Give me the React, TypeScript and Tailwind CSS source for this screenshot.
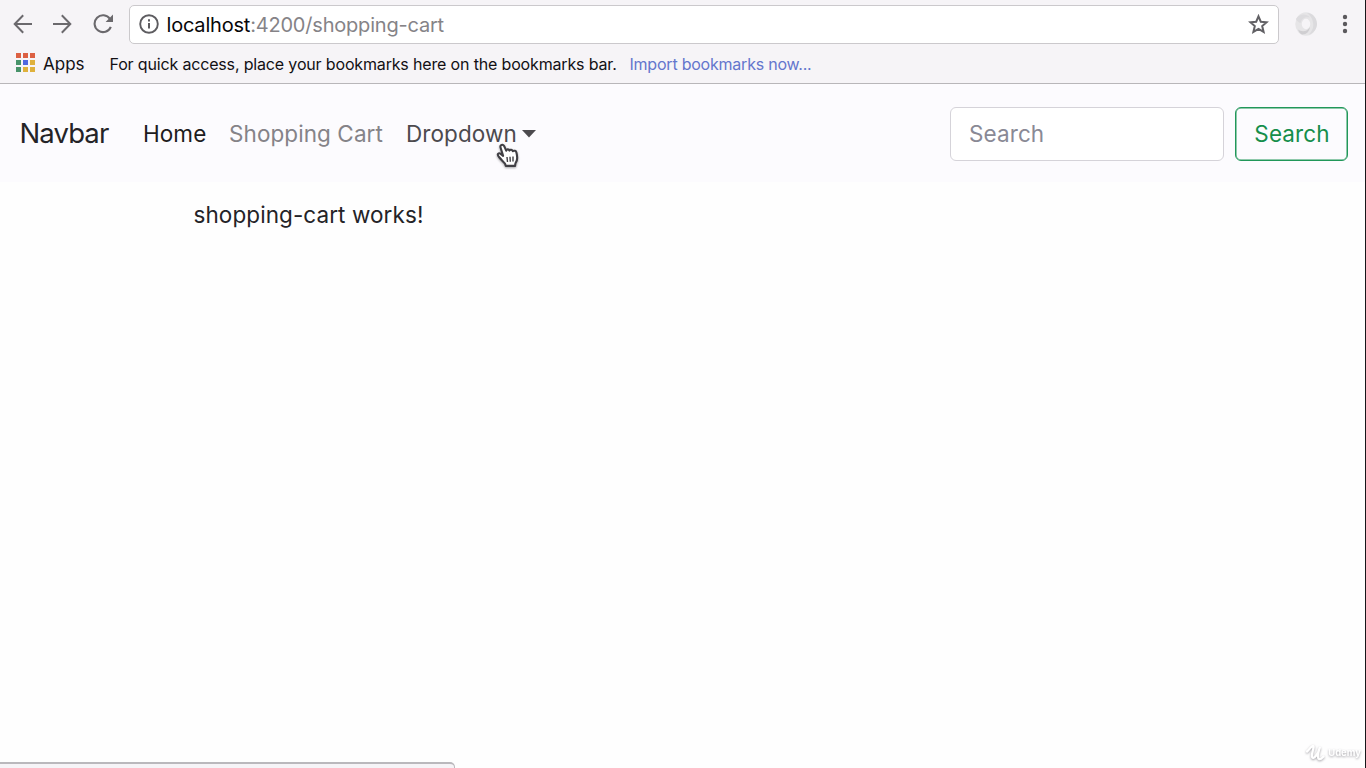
import React from "react";

const APP_COLORS = [
  "#dc6043", "#dc6043", "#dc6043",
  "#48936a", "#5067e0", "#dfb13c",
  "#48936a", "#dfb13c", "#dfb13c",
];

function BackIcon() {
  return (
    <svg className="block h-[20px] w-[20px]" viewBox="0 0 20 20" fill="none" stroke="#6b696d" strokeWidth="2">
      <path d="M19 10H2M10.2 1.3 1.7 10l8.5 8.7" />
    </svg>
  );
}

function ForwardIcon() {
  return (
    <svg className="block h-[20px] w-[20px]" viewBox="0 0 20 20" fill="none" stroke="#6b696d" strokeWidth="2">
      <path d="M1 10h17M9.8 1.3l8.5 8.7-8.5 8.7" />
    </svg>
  );
}

function ReloadIcon() {
  return (
    <svg className="block h-[20px] w-[21px]" viewBox="0 0 21 20" fill="none">
      <path d="M17 5A8.4 8.4 0 1 0 17.8 12.8" stroke="#6b696d" strokeWidth="2.1" />
      <path d="M20 .6V8h-7.4z" fill="#6b696d" />
    </svg>
  );
}

function InfoIcon() {
  return (
    <svg className="block h-[20px] w-[20px]" viewBox="0 0 20 20" fill="none">
      <circle cx="10" cy="10" r="8.8" stroke="#5d5c60" strokeWidth="1.9" />
      <path d="M9 9h2v5.6H9zM9 5.3h2v2.1H9z" fill="#5d5c60" />
    </svg>
  );
}

function StarIcon() {
  return (
    <svg className="block h-[20px] w-[21px]" viewBox="0 0 21 20" fill="none" stroke="#626165" strokeWidth="2">
      <path d="m10.5 2.3 2.3 5.4 5.9.5-4.5 3.9 1.4 5.8-5.1-3.1-5.1 3.1 1.4-5.8-4.500-3.900 5.900-.5z" />
    </svg>
  );
}

function SwirlIcon() {
  return (
    <svg className="block h-[24px] w-[24px]" viewBox="0 0 24 24">
      <ellipse cx="12" cy="12" rx="7.500" ry="8.500" fill="none" stroke="#e6e5e7" strokeWidth="6.500" />
      <path d="M13 1c6 .5 10 5 10 11 0 5-3.500 9.500-8.500 10.700C18 19.500 20 15.500 19 10.500 18.500 6.500 16 3 13 1z" fill="#dbdadd" />
      <path d="M4 17.500c4 3 9.500 2 12-2.500-.5 4.500-3.500 7.500-7.500 7.500-2 0-3.700-2.500-4.500-5z" fill="#cfced1" />
      <path d="M2 7C4.500 2.500 11.500.5 16 5.500 11.500 4.500 7.500 6.500 6.500 11 4.500 10.500 3 9 2 7z" fill="#dddcdf" />
    </svg>
  );
}

function HandCursor() {
  return (
    <svg className="absolute left-[90px] top-[26px] h-[27px] w-[24px] drop-shadow-[0_1px_1px_rgba(0,0,0,0.35)]" viewBox="0 0 24 27">
      <path
        d="M5.200 2.200c1.100-.8 2.500-.3 3 .9l2 4.600c.1-1.600 2.700-1.900 3.300-.1.600-1.300 2.900-1 3.300.6 1.200-1 3.200-.3 3.600 1.200.7 2.700 1.200 5.300.4 8-.5 1.600-1.400 2.500-1.500 3.600l-.2 1.900H9.800L9 20.700c-1.700-2.200-3.600-3.800-5.800-6.400-1.200-1.400-1.900-2.700-1-3.600 1-.9 2.500-.2 3.800 1.300l1.100.8L4.600 4.700c-.4-1.100-.2-2 .6-2.500z"
        fill="white" stroke="#403f44" strokeWidth="2.100" strokeLinejoin="round"
      />
      <path d="m11 14 .5 5M14 13.800l.3 5M17 13.500v5" stroke="#414045" strokeWidth="1.400" />
    </svg>
  );
}

function BrowserChrome() {
  return (
    <header className="h-[84px] border-b border-[#b8b6b9] bg-[#f6f4f7]">
      <div className="flex h-[48px] items-center pl-[13px]">
        <BackIcon />
        <div className="ml-[19px]"><ForwardIcon /></div>
        <div className="ml-[20.500px]"><ReloadIcon /></div>
        <div className="ml-[15px] flex h-[39px] w-[1150.500px] items-center rounded-[5px] border border-[#cbc9cc] bg-white pl-[9px] pr-[9.500px]">
          <InfoIcon />
          <div className="ml-[8px] flex-1 whitespace-nowrap pt-[2px] text-[20px] tracking-[-0.200px] text-[#858387]">
            <span className="text-[#080709]">localhost</span>:4200/shopping-cart
          </div>
          <StarIcon />
        </div>
        <div className="ml-[14.500px]"><SwirlIcon /></div>
        <svg className="ml-[24px] block h-[20px] w-[6px]" viewBox="0 0 6 20" fill="#5b595d">
          <circle cx="3" cy="3" r="2.200" />
          <circle cx="3" cy="10" r="2.200" />
          <circle cx="3" cy="17" r="2.200" />
        </svg>
      </div>
      <div className="flex h-[32px] items-center whitespace-nowrap pl-4 text-[16px] text-[#121014]">
        <div className="-mt-[3px] grid grid-cols-3 gap-[2px]">
          {APP_COLORS.map((color, i) => (
            <span key={i} className="h-[5px] w-[5px]" style={{ backgroundColor: color }} />
          ))}
        </div>
        <span className="ml-[8px] w-[66.500px] pt-[1.500px] text-[17px]">Apps</span>
        <span className="w-[520px] tracking-[-0.160px]">For quick access, place your bookmarks here on the bookmarks bar.</span>
        <span className="tracking-[-0.220px] text-[#6476cd]">Import bookmarks now...</span>
      </div>
    </header>
  );
}

function Navbar() {
  return (
    <nav className="flex h-[98px] items-center bg-[#fcfbfe] pl-[19.500px] pr-[17px] pt-[2px] text-[22.500px] tracking-[0.080px]">
      <a className="w-[123.500px] text-[27.500px] tracking-[-0.900px] text-[#242327]">Navbar</a>
      <a className="w-[86px] text-[#1d1c20]">Home</a>
      <a className="w-[177px] whitespace-nowrap text-[#858388]">Shopping Cart</a>
      <div className="relative flex items-center text-[#4c4a4e]">
        <span className="w-[116px]">Dropdown</span>
        <svg className="h-[8px] w-[14px]" viewBox="0 0 14 8"><path d="M0 0h14L7 7.500z" fill="#4c4a4e" /></svg>
        <HandCursor />
      </div>
      <input
        placeholder="Search"
        className="ml-auto h-[54px] w-[274px] rounded-[6px] border border-[#d5d3d9] bg-white px-[18px] pb-[2px] text-[22.500px] tracking-[0.100px] placeholder:text-[#898995]"
      />
      <button className="ml-[11px] h-[54px] w-[113px] rounded-[6px] border border-[#219759] pl-[1px] text-[22.500px] tracking-[0.100px] text-[#158e4b] shadow-[inset_0_0_0_0.5px_#219759]">
        Search
      </button>
    </nav>
  );
}

export default function App() {
  return (
    <div className="relative flex h-screen flex-col overflow-hidden border-r border-[#171619] bg-[#fefefe] font-['Inter','Liberation_Sans',sans-serif]">
      <BrowserChrome />
      <Navbar />
      <main className="flex-1 pl-[193.500px] pt-[16px] text-[22.500px] leading-[33px] tracking-[0.080px] text-[#242327]">
        <p>shopping-cart works!</p>
      </main>
      <div className="absolute -left-px bottom-0 h-[6px] w-[456px] rounded-tr-[5px] border-r border-t-2 border-[#bab8bc] bg-[#f6f4f7]" />
      <div className="absolute bottom-[7px] right-[4px] flex items-center gap-[3px] text-white drop-shadow-[0_1px_1px_rgba(80,75,85,0.500)]">
        <svg className="h-[17px] w-[19px]" viewBox="0 0 19 17" fill="none" stroke="white" strokeWidth="2.300" strokeLinecap="round">
          <path d="M1 7.500C4 5 5 2 7 2c2 0-2 8-1 11 1 3 6-2 8-10-2 6-3 11-1 12 1.500.8 3-1 4.500-2.500" />
        </svg>
        <span className="text-[9.500px] font-bold leading-[14px]">Udemy</span>
      </div>
    </div>
  );
}
